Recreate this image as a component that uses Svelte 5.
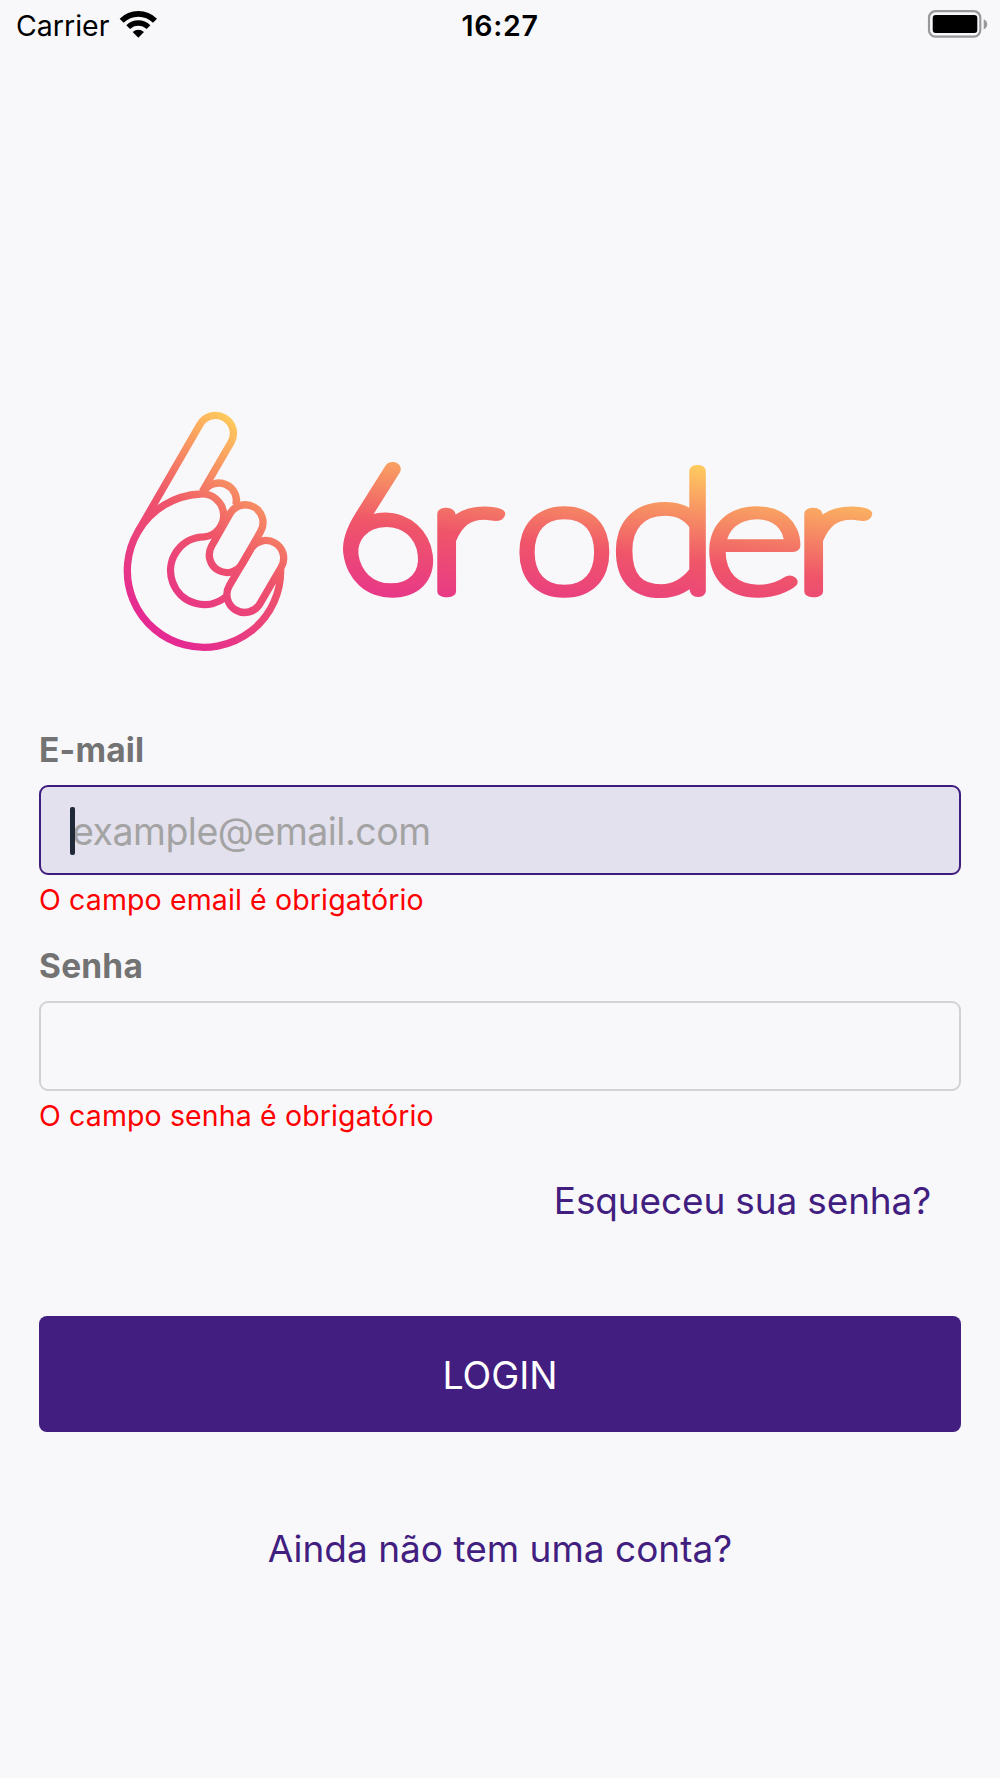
<script lang="ts">
  let email = "";
  let password = "";

  const errors = {
    email: "O campo email é obrigatório",
    password: "O campo senha é obrigatório",
  };

  // the first letter borrows the shape of a six, like the hand in the logo
  const letters = [
    { char: "6", x: 340, y: 590, sx: 1.12, sy: 1.1, skew: 7 },
    { char: "r", x: 425, y: 591, sx: 1.4, sy: 1, skew: 0 },
    { char: "o", x: 515, y: 590.5, sx: 1.137, sy: 1, skew: 0 },
    { char: "d", x: 611, y: 590.5, sx: 1.23, sy: 1.06, skew: 0 },
    { char: "e", x: 704.5, y: 590.5, sx: 1.22, sy: 1, skew: 0 },
    { char: "r", x: 792, y: 591, sx: 1.4, sy: 1, skew: 0 },
  ];
</script>

<main>
  <header class="status">
    <div class="carrier">
      <span>Carrier</span>
      <svg class="wifi" viewBox="355 25 120 90" aria-hidden="true">
        <path d="M366 60a71 71 0 0 1 100 0" stroke-width="17" />
        <path d="M385.500 79.500a43.500 43.500 0 0 1 61 0" stroke-width="16" />
        <path class="dot" d="M399 94q17-13 34 0l-17 17z" />
      </svg>
    </div>
    <div class="time">16:27</div>
    <svg class="battery" viewBox="0 0 61 28" aria-hidden="true">
      <rect class="case" x="2" y="1.200" width="51.300" height="25.500" rx="6.500" />
      <rect x="5.700" y="5" width="44.600" height="18" rx="3" />
      <path class="tip" d="M56.700 9.200q3.500 1.500 3.500 5t-3.500 5z" />
    </svg>
  </header>

  <div class="brand">
    <svg class="hand" viewBox="0 0 570 780" aria-hidden="true">
      <defs>
        <linearGradient id="hand" gradientUnits="userSpaceOnUse" x1="70" y1="615" x2="445" y2="115">
          <stop offset="0" stop-color="#e52b91" />
          <stop offset="0.500" stop-color="#ef5569" />
          <stop offset="1" stop-color="#ffca5c" />
        </linearGradient>
      </defs>
      <g fill="none" stroke="url(#hand)" stroke-width="22" stroke-linejoin="round">
        <path d="M512 508A230 230 0 1 1 84 395L270 73A53.770 53.770 0 0 1 363 127L277 275" />
        <path d="M84 395A230 230 0 0 1 271 282A64 64 0 0 1 282 410.500A101.500 101.500 0 1 0 347 591" />
        <path d="M283 272A53 53 0 0 1 378 315" />
        <path d="M360 341A53 53 0 0 1 452 394L397 491A53 53 0 0 1 305 438Z" />
        <path d="M422 448A53 53 0 0 1 514 501L450 611A53 53 0 0 1 358 557Z" />
      </g>
    </svg>
    <svg class="wordmark" viewBox="330 400 560 260" role="img" aria-label="broder">
      <defs>
        {#each letters as { x, y, sx, sy, skew }, i}
          <linearGradient
            id="letter{i}"
            gradientUnits="userSpaceOnUse"
            x1="377"
            y1="596"
            x2="398"
            y2="425"
            gradientTransform="scale({1 / sx} {1 / sy}) skewX({-skew}) translate({-x} {-y})"
          >
            <stop offset="0" stop-color="#e83888" />
            <stop offset="0.420" stop-color="#ef5569" />
            <stop offset="1" stop-color="#ffd05e" />
          </linearGradient>
        {/each}
      </defs>
      {#each letters as { char, x, y, sx, sy, skew }, i}
        <text
          transform="translate({x} {y}) skewX({skew}) scale({sx} {sy})"
          fill="url(#letter{i})"
          stroke="url(#letter{i})">{char}</text>
      {/each}
    </svg>
  </div>

  <form on:submit|preventDefault>
    <label for="email">E-mail</label>
    <div class="field">
      <input id="email" class="active" placeholder="example@email.com" bind:value={email} />
      <span class="caret"></span>
    </div>
    <p class="error">{errors.email}</p>

    <label for="password">Senha</label>
    <div class="field">
      <input id="password" type="password" bind:value={password} />
    </div>
    <p class="error">{errors.password}</p>

    <a class="forgot" href="#forgot">Esqueceu sua senha?</a>
    <button type="submit">LOGIN</button>
    <a class="signup" href="#signup">Ainda não tem uma conta?</a>
  </form>
</main>

<style>
  :global(body) {
    background: #f8f8fb;
  }

  main {
    box-sizing: border-box;
    min-height: 1778px;
    font-family: Inter, "Liberation Sans", sans-serif;
    background: #f8f8fb;
  }

  .status {
    display: grid;
    grid-template-columns: 1fr auto 1fr;
    align-items: center;
    height: 50px;
    padding: 0 12px 0 16px;
    color: #000;
    font-size: 28.500px;
  }

  .carrier {
    display: flex;
    align-items: center;
    gap: 9px;
  }

  .wifi {
    width: 40px;
    height: 30px;
    margin-bottom: 3px;
    fill: none;
    stroke: #000;
  }

  .wifi .dot {
    fill: #000;
    stroke: none;
  }

  .time {
    margin-right: 4px;
    font-weight: 600;
    letter-spacing: 0.700px;
  }

  .battery {
    width: 61px;
    height: 28px;
    margin-bottom: 2px;
    justify-self: end;
  }

  .case {
    fill: none;
    stroke: #98989b;
    stroke-width: 2.200;
  }

  .tip {
    fill: #98989b;
  }

  .brand {
    display: flex;
    align-items: flex-start;
    gap: 30px;
    padding: 350px 0 0 110px;
    height: 260px;
  }

  .hand {
    width: 190px;
    height: 260px;
  }

  .wordmark {
    width: 560px;
    height: 260px;
    overflow: visible;
  }

  .wordmark text {
    font-family: Lato, sans-serif;
    font-size: 158px;
    font-weight: 100;
    stroke-width: 11.500px;
    stroke-linejoin: round;
  }

  form {
    display: flex;
    flex-direction: column;
    padding: 70px 39px 0;
  }

  label {
    height: 55px;
    line-height: 41px;
    color: #737373;
    font-size: 33.500px;
    font-weight: 700;
    letter-spacing: 0.200px;
  }

  .field {
    position: relative;
    display: flex;
  }

  input {
    box-sizing: border-box;
    width: 100%;
    height: 90px;
    padding: 2px 30px 0 31px;
    border: 2px solid #d2d2d4;
    border-radius: 9px;
    outline: none;
    background: #f8f8fb;
    font-family: inherit;
    font-size: 37.500px;
    letter-spacing: -0.500px;
  }

  input.active {
    border-color: #3f1d7f;
    background: #e4e1ee;
  }

  input::placeholder {
    color: #a3a3a3;
    opacity: 1;
  }

  .caret {
    position: absolute;
    left: 31px;
    top: 22px;
    width: 5px;
    height: 48px;
    border-radius: 2px;
    background: #1f2937;
  }

  .error {
    height: 71px;
    margin: 0;
    padding-top: 5px;
    box-sizing: border-box;
    line-height: 40px;
    color: #ff0000;
    font-size: 28.500px;
    letter-spacing: 0.130px;
  }

  a {
    color: #411e7f;
    font-size: 37px;
    line-height: 48px;
    text-decoration: none;
  }

  .forgot {
    align-self: flex-end;
    margin: 15px 30px 0 0;
    letter-spacing: -0.150px;
  }

  button {
    height: 116px;
    margin: 91px 0 93px;
    padding: 2px 0 0;
    border: 0;
    border-radius: 8px;
    background: #411e7f;
    color: #fff;
    font-family: inherit;
    font-size: 37.500px;
  }

  .signup {
    align-self: center;
  }
</style>
